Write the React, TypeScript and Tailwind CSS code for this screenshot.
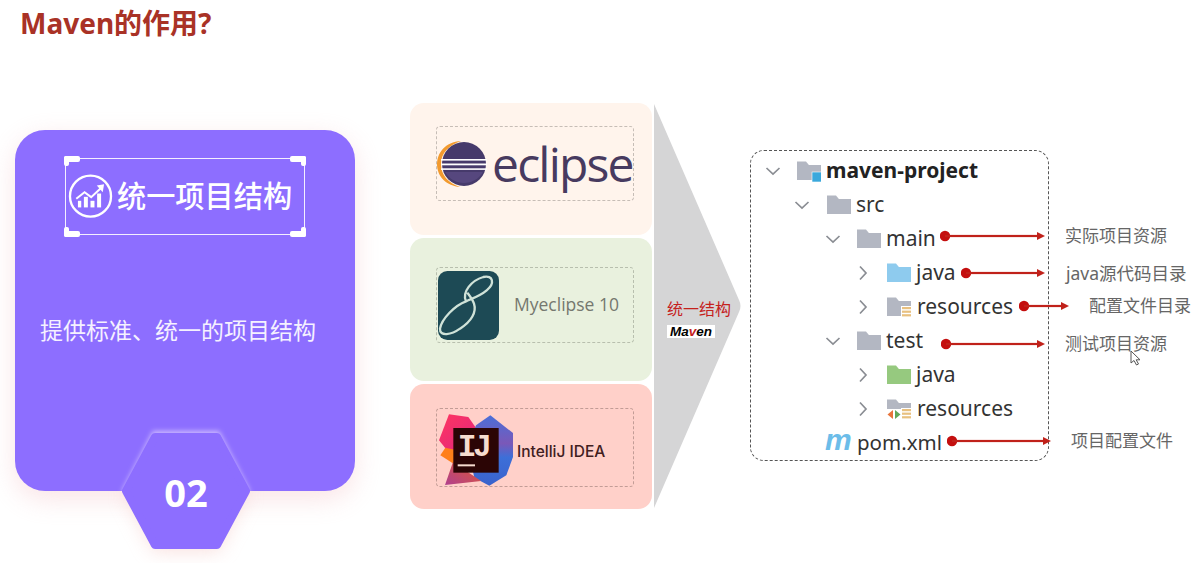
import React from "react";

const CJK = "font-['Noto_Sans','Noto_Sans_CJK_SC',sans-serif]";

function Folder({ color = "#b3b7c2", badge }: { color?: string; badge?: "project" | "res" | "testres" }) {
  return (
    <svg width="24" height="22" viewBox="0 0 24 22" className="shrink-0">
      <path d="M0 1.5 H9 L12 5 H24 V20 H0 Z" fill={color} />
      <path d="M9 1.5 L12 5 H24 V3 H11 Z" fill="#ffffff" opacity="0.45" />
      {badge === "project" && <rect x="15" y="12" width="10" height="10" fill="#3aa8dc" stroke="#fff" strokeWidth="0.6" />}
      {(badge === "res" || badge === "testres") && (
        <g>
          <rect x="14" y="10" width="10" height="12" fill="#ffffff" />
          <rect x="15" y="11" width="9" height="2.2" fill="#e8c07f" />
          <rect x="15" y="14.6" width="9" height="2.2" fill="#e8c07f" />
          <rect x="15" y="18.2" width="9" height="2.2" fill="#e8c07f" />
        </g>
      )}
      {badge === "testres" && (
        <g>
          <rect x="0" y="11" width="14" height="11" fill="#ffffff" />
          <path d="M6 12 L0.5 16.5 L6 21 Z" fill="#e8743b" />
          <path d="M8 12 L13.5 16.5 L8 21 Z" fill="#62a85a" />
        </g>
      )}
    </svg>
  );
}

function Chevron({ open }: { open: boolean }) {
  return (
    <svg width="16" height="16" viewBox="0 0 16 16" className="shrink-0" fill="none" stroke="#8a8d93" strokeWidth="1.7">
      {open ? <path d="M1.5 5 L8 11 L14.5 5" /> : <path d="M5 1.5 L11 8 L5 14.5" />}
    </svg>
  );
}

function Arrow({ width }: { width: number }) {
  return (
    <svg width={width} height="12" viewBox={`0 0 ${width} 12`} className="shrink-0">
      <circle cx="5" cy="6" r="5.2" fill="#c40f0f" />
      <rect x="5" y="4.9" width={width - 10} height="2.2" fill="#c0211a" />
      <path d={`M${width - 8} 2 L${width} 6 L${width - 8} 10 Z`} fill="#c0211a" />
    </svg>
  );
}

type Row = {
  pl: string;
  open?: boolean;
  icon: React.ReactNode;
  iconGap: string;
  name: string;
  nameCls: string;
  shift?: string;
  arrow?: number;
  label?: string;
  labelCls?: string;
};

const rows: Row[] = [
  { pl: "pl-[14px]", open: true, icon: <Folder badge="project" />, iconGap: "ml-[16px]", name: "maven-project", nameCls: "w-[160px] font-bold text-[#222]" },
  { pl: "pl-[43px]", open: true, icon: <Folder />, iconGap: "ml-[17px]", name: "src", nameCls: "w-[40px] text-[#333]" },
  { pl: "pl-[74px]", open: true, icon: <Folder />, iconGap: "ml-[16px]", name: "main", nameCls: "w-[54px] text-[#333]", shift: "-mt-[6px]", arrow: 105, label: "实际项目资源", labelCls: "ml-[20px] text-[17px]" },
  { pl: "pl-[104px]", open: false, icon: <Folder color="#8ecbee" />, iconGap: "ml-[16px]", name: "java", nameCls: "w-[45px] text-[#333]", arrow: 84, label: "java源代码目录", labelCls: "ml-[21px] text-[17.5px]" },
  { pl: "pl-[104px]", open: false, icon: <Folder badge="res" />, iconGap: "ml-[16px]", name: "resources", nameCls: "w-[103px] pl-[1px] text-[#333]", shift: "-mt-[2px]", arrow: 50, label: "配置文件目录", labelCls: "ml-[20px] text-[17px]" },
  { pl: "pl-[74px]", open: true, icon: <Folder />, iconGap: "ml-[16px]", name: "test", nameCls: "w-[55px] text-[#333]", shift: "mt-[6px]", arrow: 104, label: "测试项目资源", labelCls: "ml-[20px] text-[17px]" },
  { pl: "pl-[104px]", open: false, icon: <Folder color="#96c97f" />, iconGap: "ml-[16px]", name: "java", nameCls: "w-[45px] text-[#333]" },
  { pl: "pl-[104px]", open: false, icon: <Folder badge="testres" />, iconGap: "ml-[16px]", name: "resources", nameCls: "w-[103px] pl-[1px] text-[#333]" },
];

function TreeRow({ r }: { r: Row }) {
  return (
    <div className={`flex h-[34px] w-[445px] items-center ${r.pl}`}>
      <Chevron open={!!r.open} />
      <div className={r.iconGap}>{r.icon}</div>
      <div className={`-mt-[2px] ml-[5px] shrink-0 text-[21px] leading-[34px] ${r.nameCls}`}>{r.name}</div>
      {r.arrow && (
        <div className={`flex items-center ${r.shift ?? ""}`}>
          <Arrow width={r.arrow} />
          <span className={`shrink-0 text-[#666] ${r.labelCls}`}>{r.label}</span>
        </div>
      )}
    </div>
  );
}

function Handles() {
  const bars = [
    "-left-[2px] -top-[3px] h-[6px] w-[16px]",
    "-right-[2px] -top-[3px] h-[6px] w-[16px]",
    "-left-[2px] -bottom-[3px] h-[6px] w-[16px]",
    "-right-[2px] -bottom-[3px] h-[6px] w-[16px]",
    "-left-[2px] -top-[3px] h-[10px] w-[5px]",
    "-right-[2px] -top-[3px] h-[10px] w-[5px]",
    "-left-[2px] -bottom-[3px] h-[10px] w-[5px]",
    "-right-[2px] -bottom-[3px] h-[10px] w-[5px]",
  ];
  return (
    <>
      {bars.map((s) => (
        <span key={s} className={`absolute ${s} rounded-[2px] bg-white`} />
      ))}
    </>
  );
}

function Hexagon() {
  return (
    <div className="absolute -bottom-[67px] left-[98px] flex h-[136px] w-[146px] items-center justify-center">
      <svg width="146" height="136" viewBox="0 0 146 136" className="absolute left-0 top-0 overflow-visible">
        <defs>
          <filter id="hb" x="-30%" y="-30%" width="160%" height="160%">
            <feGaussianBlur stdDeviation="2.5" />
          </filter>
          <filter id="hp" x="-30%" y="-30%" width="160%" height="160%">
            <feGaussianBlur stdDeviation="9" />
          </filter>
          <clipPath id="topc"><rect x="-10" y="-10" width="166" height="79" /></clipPath>
          <clipPath id="botc"><rect x="-20" y="69" width="186" height="90" /></clipPath>
        </defs>
        <g clipPath="url(#botc)">
          <path d="M12 74 L41 18 H105 L134 74 L105 130 H41 Z" fill="#f5c9c6" opacity="0.55" filter="url(#hp)" />
        </g>
        <g clipPath="url(#topc)">
          <path d="M9 69 L40 9 H106 L137 69 L106 129 H40 Z" fill="#cdbbff" filter="url(#hb)" />
        </g>
        <path d="M13 69 L42 15 H104 L133 69 L104 123 H42 Z" fill="#8d6eff" stroke="#8d6eff" strokeWidth="8" strokeLinejoin="round" />
      </svg>
      <span className="relative mt-[4px] text-[38px] font-bold leading-none text-white">02</span>
    </div>
  );
}

function EclipseLogo() {
  return (
    <svg width="50" height="52" viewBox="0 0 50 52" className="shrink-0">
      <path d="M24 3 C8 4 0 15 0 26 C0 39 10 48 23 49 C11 45 4 37 4 26 C4 15 12 7 24 3 Z" fill="#f29a2e" />
      <circle cx="27" cy="26" r="22" fill="#463a6b" />
      <path d="M8 34 A22 22 0 0 0 46 34 Z" fill="#5c4d86" opacity="0.7" />
      <rect x="4" y="21" width="46" height="1.6" fill="#fff" />
      <rect x="4" y="25.5" width="46" height="1.8" fill="#fff" />
      <rect x="4" y="30.3" width="46" height="1.6" fill="#fff" />
    </svg>
  );
}

function MyeclipseLogo() {
  return (
    <svg width="61" height="69" viewBox="24 27 183 207" className="shrink-0">
      <rect x="24" y="27" width="183" height="207" rx="28" fill="#1d4a55" />
      <path
        d="M108 118 C95 90 125 55 160 45 C190 38 195 65 170 85 C150 102 125 110 108 118 C75 130 35 170 30 200 C28 225 65 218 90 200 C125 178 140 150 132 125 C128 112 118 100 112 92"
        fill="none"
        stroke="#cfe2d8"
        strokeWidth="7"
      />
    </svg>
  );
}

function IdeaLogo() {
  return (
    <svg width="72" height="76" viewBox="18 9 216 228" className="shrink-0 overflow-visible">
      <defs>
        <linearGradient id="ijr" x1="0" y1="0" x2="1" y2="1">
          <stop offset="0" stopColor="#ff3560" />
          <stop offset="1" stopColor="#e0267f" />
        </linearGradient>
        <linearGradient id="ijb" x1="0" y1="0" x2="0" y2="1">
          <stop offset="0" stopColor="#4a6fd8" />
          <stop offset="0.4" stopColor="#7a58b8" />
          <stop offset="0.6" stopColor="#3d6fd8" />
          <stop offset="1" stopColor="#3a62cc" />
        </linearGradient>
        <linearGradient id="ijp" x1="0" y1="1" x2="1" y2="0">
          <stop offset="0" stopColor="#b0408f" />
          <stop offset="1" stopColor="#e0582f" />
        </linearGradient>
      </defs>
      <path d="M28 145 L50 112 L75 122 L70 172 Z" fill="#ff7f1a" />
      <path d="M24 100 L54 22 L112 30 L140 70 L80 130 L42 122 Z" fill="url(#ijr)" />
      <path d="M135 55 L178 25 L246 78 L246 150 L226 205 L175 236 L130 212 L110 120 Z" fill="url(#ijb)" />
      <path d="M42 234 L66 165 L150 222 Z" fill="url(#ijp)" />
      <rect x="67" y="63" width="136" height="134" fill="#2b0505" />
      <rect x="80" y="172" width="52" height="6" fill="#f6dccf" />
      <text x="80" y="148" fill="#f6dccf" fontFamily="'Liberation Mono', monospace" fontWeight="700" fontSize="94" letterSpacing="-10">IJ</text>
    </svg>
  );
}

function TrendIcon() {
  return (
    <svg width="45" height="45" viewBox="25 25 136 136" fill="none" className="shrink-0">
      <circle cx="93" cy="92" r="62" stroke="#fff" strokeWidth="7" />
      <rect x="55" y="106" width="10" height="20" fill="#fff" />
      <rect x="73" y="94" width="12" height="32" fill="#fff" />
      <rect x="93" y="106" width="12" height="20" fill="#fff" />
      <rect x="113" y="84" width="12" height="42" fill="#fff" />
      <path d="M50 100 L75 80 L95 95 L128 64" stroke="#fff" strokeWidth="6" />
      <path d="M112 60 L134 56 L130 80 Z" fill="#fff" />
    </svg>
  );
}

export default function App() {
  return (
    <div className={`relative h-[563px] w-[1202px] overflow-hidden bg-white ${CJK}`}>
      <div className="h-[103px] pl-[20px] pt-[2px] text-[28px] font-bold leading-[42px] text-[#a93226]">Maven的作用?</div>

      <div className="flex items-start">
        {/* left card */}
        <div className="relative ml-[15px] mt-[27px] h-[361px] w-[340px] shrink-0 rounded-[30px] bg-[#8d6eff] shadow-[0_8px_26px_rgba(245,195,200,0.45)]">
          <div className="relative ml-[50px] mt-[28px] flex h-[77px] w-[240px] items-center border-[1.5px] border-[#f4f0ff] pl-[2px]">
            <Handles />
            <TrendIcon />
            <span className="ml-[4px] text-[29.2px] font-medium leading-none whitespace-nowrap text-white">统一项目结构</span>
          </div>
          <div className="ml-[25px] mt-[79px] text-[23px] leading-[32px] whitespace-nowrap text-[#f5f1ff]">提供标准、统一的项目结构</div>
          <Hexagon />
        </div>

        {/* logo cards */}
        <div className="ml-[55px] flex w-[242px] shrink-0 flex-col gap-[3px]">
          <div className="flex h-[132px] flex-col rounded-[14px] bg-[#fff4ec] pl-[26px] pt-[23px]">
            <div className="flex h-[75px] w-[198px] items-center rounded-[4px] border border-dashed border-[#c6bdb6]">
              <EclipseLogo />
              <span className="ml-[5px] font-['Open_Sans',sans-serif] text-[48px] leading-none tracking-[-1.8px] text-[#473a5f]">eclipse</span>
            </div>
          </div>
          <div className="flex h-[143px] flex-col rounded-[14px] bg-[#e9f1de] pl-[26px] pt-[29px]">
            <div className="flex h-[76px] w-[198px] items-center rounded-[4px] border border-dashed border-[#b8bfae] pl-[1px]">
              <MyeclipseLogo />
              <span className="ml-[15px] font-['Open_Sans',sans-serif] text-[17.5px] leading-none whitespace-nowrap text-[#75786f]">Myeclipse 10</span>
            </div>
          </div>
          <div className="flex h-[125px] flex-col rounded-[14px] bg-[#ffd0c9] pl-[26px] pt-[24px]">
            <div className="flex h-[79px] w-[198px] items-center rounded-[4px] border border-dashed border-[#c29c96]">
              <IdeaLogo />
              <span className="ml-[8px] mt-[8px] font-['Inter',sans-serif] text-[15.5px] font-medium leading-none whitespace-nowrap text-[#41201f]">IntelliJ IDEA</span>
            </div>
          </div>
        </div>

        {/* funnel */}
        <div className="relative ml-[2px] h-[406px] w-[88px] shrink-0">
          <svg width="88" height="406" viewBox="0 0 88 406" className="absolute left-0 top-0">
            <path d="M0 1 L85 197 Q88 203 85 209 L0 405 Z" fill="#d5d5d6" />
          </svg>
          <div className="relative flex flex-col items-start pl-[13px] pt-[196px]">
            <span className="text-[16px] leading-[20px] whitespace-nowrap text-[#c5211d]">统一结构</span>
            <span className="mt-[6px] flex h-[13px] w-[48px] items-center justify-center bg-white font-['Liberation_Sans',sans-serif] text-[13.5px] font-bold italic leading-none text-black">
              Ma<span className="text-[#c5211d]">v</span>en
            </span>
          </div>
        </div>

        {/* tree */}
        <div className="relative ml-[8px] mt-[47px] h-[311px] w-[299px] shrink-0 rounded-[14px] border border-dashed border-[#555] pt-[3px]">
          {rows.map((r, i) => (
            <TreeRow key={i} r={r} />
          ))}
          <div className="flex h-[34px] w-[445px] items-center pl-[74px]">
            <span className="-mt-[6px] w-[26px] font-['Liberation_Sans',sans-serif] text-[30px] font-bold italic leading-none text-[#6cbde9]">m</span>
            <span className="-mt-[2px] ml-[6px] w-[90px] shrink-0 text-[20.5px] leading-[34px] text-[#333]">pom.xml</span>
            <div className="-mt-[4px] flex items-center">
              <Arrow width={104} />
              <span className="ml-[20px] shrink-0 text-[17px] text-[#666]">项目配置文件</span>
            </div>
          </div>
          <svg width="12" height="16" viewBox="0 0 12 16" className="absolute left-[379px] top-[199px]">
            <path d="M1 1 V13 L4 10.5 L6.5 15 L8.5 14 L6.2 9.8 H10 Z" fill="#fff" stroke="#555" strokeWidth="1" />
          </svg>
        </div>
      </div>
    </div>
  );
}
